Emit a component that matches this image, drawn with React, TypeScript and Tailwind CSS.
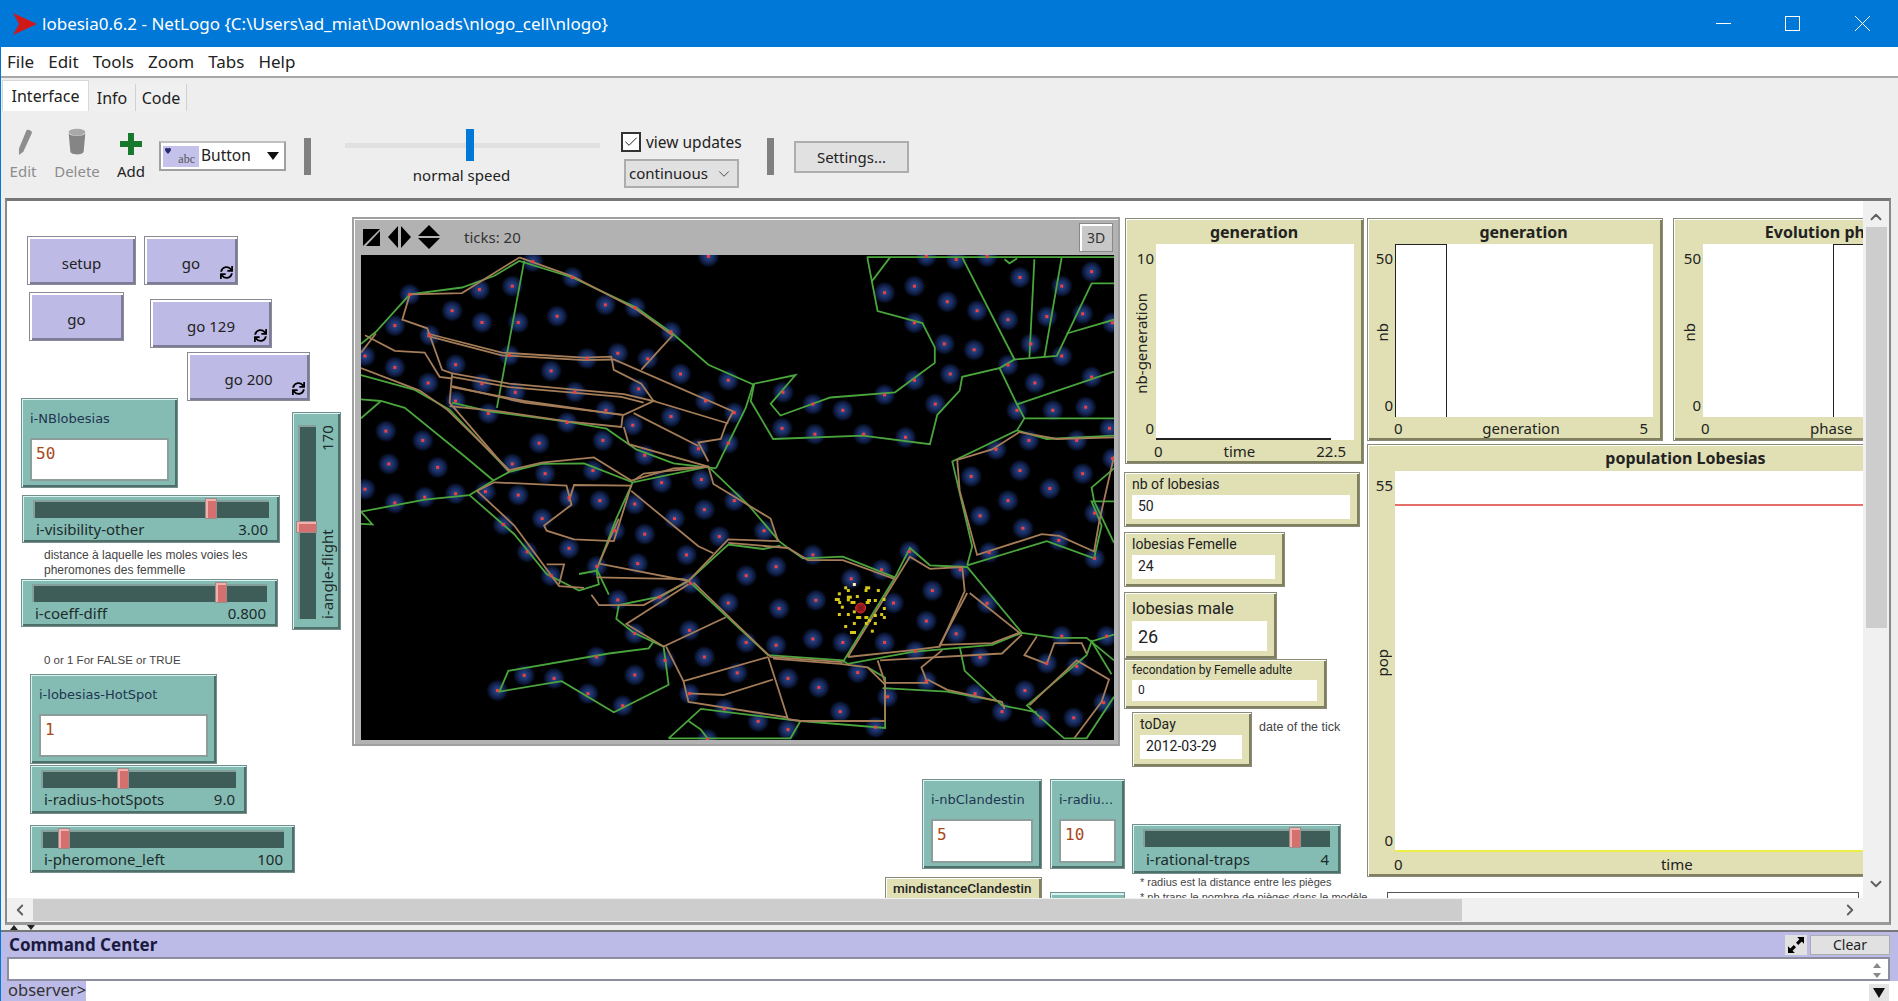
import { ChevronDown, ChevronLeft, ChevronRight, ChevronUp, Check } from 'lucide-react';
import { FaSync } from 'react-icons/fa';

const mx = (x: number) => ((x - 22) * 753) / 1513;
const my = (y: number) => ((y - 118) * 485) / 1402;

type Pt = [number, number];

const GREEN: Pt[][] = [
  [[22, 375], [52, 340], [120, 232], [225, 212], [290, 178], [340, 135], [447, 183], [575, 270], [648, 345], [720, 435], [810, 492], [795, 560], [735, 735]],
  [[350, 135], [295, 560]],
  [[205, 545], [280, 570], [436, 600], [515, 620], [575, 680], [650, 720], [735, 735]],
  [[22, 465], [130, 508], [200, 565], [320, 745]],
  [[22, 535], [62, 540], [110, 560], [230, 700], [288, 770], [240, 812], [150, 825], [22, 860], [45, 897], [22, 895]],
  [[22, 590], [62, 540]],
  [[288, 770], [320, 745], [385, 722], [470, 720], [568, 775], [720, 730], [800, 840], [862, 945], [880, 965], [910, 995], [990, 990], [1095, 1050]],
  [[240, 812], [330, 925], [395, 1040], [460, 1088], [500, 1070], [495, 1030], [535, 880], [568, 775]],
  [[460, 1040], [497, 1030], [520, 1100]],
  [[680, 1060], [625, 1105], [540, 1130], [535, 1170], [570, 1210], [630, 1250], [640, 1360], [530, 1440], [425, 1350], [300, 1380], [318, 1320], [520, 1270], [600, 1255], [610, 1235]],
  [[680, 1060], [760, 955], [830, 968], [865, 958]],
  [[680, 1060], [840, 1275], [990, 1290], [1000, 1300], [1130, 1265], [1290, 1245], [1350, 1210], [1240, 1020], [1165, 1015], [1125, 965], [1095, 1050], [990, 1295]],
  [[1240, 1015], [1400, 945], [1495, 995], [1510, 900], [1490, 830], [1535, 830]],
  [[1240, 1015], [1250, 960], [1210, 715], [1340, 625], [1355, 590], [1340, 550], [1305, 445], [1230, 470], [1225, 510], [1180, 580], [1165, 665], [1030, 640], [850, 650], [805, 540], [812, 490], [895, 465], [845, 548], [865, 582], [965, 530], [1095, 515], [1175, 430], [1175, 385], [1150, 315], [1060, 280], [1040, 130], [1040, 124], [1535, 124]],
  [[1335, 420], [1230, 125]],
  [[1305, 445], [1335, 420], [1420, 410], [1490, 200], [1535, 200]],
  [[1365, 415], [1375, 130]],
  [[1395, 415], [1430, 125]],
  [[1440, 345], [1535, 305]],
  [[1340, 550], [1535, 455]],
  [[1355, 590], [1535, 590]],
  [[1048, 195], [1085, 125]],
  [[1315, 130], [1325, 142], [1340, 128]],
  [[1340, 625], [1400, 650], [1535, 640]],
  [[1350, 1210], [1420, 1225], [1480, 1225], [1535, 1290]],
  [[1490, 1235], [1535, 1215]],
  [[1535, 1395], [1480, 1515], [1435, 1515], [1360, 1420], [1480, 1275], [1490, 1235], [1530, 1330]],
  [[1225, 1250], [1235, 1320], [1310, 1420], [1380, 1440]],
  [[1070, 1370], [1200, 1380], [1310, 1410]],
  [[640, 1515], [705, 1430], [905, 1465], [885, 1515], [640, 1515]],
  [[680, 1465], [705, 1490], [718, 1515]],
  [[905, 1465], [1075, 1485], [1075, 1340], [1040, 1310]],
  [[1535, 735], [1490, 790], [1495, 830], [1535, 950]],
];

const BROWN: Pt[][] = [
  [[340, 125], [225, 228], [120, 232], [105, 305], [155, 330], [185, 450], [205, 460], [200, 545], [320, 745]],
  [[22, 445], [140, 510], [195, 565], [320, 740], [385, 718], [490, 703], [565, 770], [650, 735], [720, 730]],
  [[340, 125], [447, 180], [575, 275], [648, 350], [585, 450]],
  [[155, 345], [305, 400], [470, 415], [525, 412], [530, 450], [585, 490], [610, 540], [760, 605]],
  [[155, 352], [305, 408], [470, 422], [530, 420], [770, 570], [755, 610], [745, 650], [700, 660], [720, 715]],
  [[205, 460], [320, 490], [550, 520], [610, 540], [550, 580], [350, 545], [205, 497]],
  [[205, 470], [320, 500], [545, 528], [590, 545]],
  [[205, 500], [350, 540], [545, 580]],
  [[200, 555], [300, 570], [440, 600], [545, 615], [548, 580]],
  [[550, 615], [560, 665], [720, 730]],
  [[570, 575], [700, 670]],
  [[30, 350], [90, 395], [150, 400], [180, 470], [205, 475]],
  [[22, 400], [52, 345]],
  [[255, 800], [290, 775], [435, 785], [445, 840], [390, 900], [395, 915], [450, 940], [530, 945], [565, 785], [450, 783], [440, 830]],
  [[255, 800], [330, 900], [420, 1075], [470, 1080]],
  [[395, 1012], [430, 1012], [420, 1070]],
  [[565, 800], [700, 960], [730, 980]],
  [[570, 770], [590, 750], [720, 730], [730, 780], [845, 880], [860, 945], [760, 940], [680, 1060], [500, 1010], [540, 880]],
  [[495, 1050], [670, 1055], [680, 1060]],
  [[485, 1100], [500, 1130], [590, 1130], [680, 1060]],
  [[680, 1070], [555, 1185], [630, 1250], [755, 1165]],
  [[760, 950], [880, 965], [920, 1000], [990, 1000], [1095, 1055]],
  [[690, 1065], [845, 1280], [990, 1295]],
  [[1000, 1280], [1125, 990], [1165, 1025], [1230, 1020], [1235, 1090], [1185, 1250], [1130, 1260], [1000, 1280]],
  [[1240, 1095], [1185, 1245], [1290, 1240], [1345, 1210], [1245, 1095]],
  [[1060, 1290], [1075, 1355], [1160, 1355], [1148, 1310], [1190, 1260]],
  [[1160, 1345], [1200, 1375], [1310, 1410], [1315, 1430]],
  [[1065, 1290], [1310, 1270], [1350, 1215]],
  [[1380, 1220], [1355, 1275], [1400, 1300], [1415, 1240], [1470, 1240], [1480, 1270]],
  [[840, 1280], [880, 1460], [905, 1465], [1075, 1465], [1075, 1360], [1040, 1310], [985, 1300], [850, 1285]],
  [[840, 1280], [670, 1350], [680, 1410], [880, 1455]],
  [[680, 1385], [750, 1390], [850, 1345]],
  [[635, 1250], [670, 1350]],
  [[1345, 630], [1290, 680], [1220, 710], [1225, 800], [1260, 985], [1390, 925], [1425, 930], [1495, 975], [1505, 890], [1535, 700]],
  [[1345, 630], [1420, 650], [1535, 645]],
  [[1365, 1420], [1460, 1290], [1525, 1345], [1510, 1410], [1455, 1515]],
];

const DOTS: Pt[] = [
  [367, 137], [447, 183], [120, 232], [260, 218], [326, 208], [205, 279], [265, 313], [338, 313], [416, 295], [513, 262], [573, 270], [90, 322], [645, 340], [30, 410], [90, 443], [160, 350], [320, 408], [212, 435], [404, 453], [476, 417], [538, 402], [598, 418], [664, 462], [760, 480], [157, 488], [265, 490], [332, 515], [452, 514], [580, 505], [714, 540], [212, 540], [514, 567], [278, 576], [436, 602], [645, 585], [772, 574], [568, 610], [72, 627], [146, 654], [380, 662], [508, 654], [760, 662], [700, 678], [592, 697], [326, 722], [78, 722], [176, 732], [392, 750], [488, 741], [30, 795], [90, 835], [150, 818], [212, 808], [272, 802], [338, 812], [440, 820], [502, 828], [626, 776], [706, 767], [772, 828], [572, 838], [712, 854], [652, 880], [386, 880], [308, 897], [832, 915], [742, 932], [592, 925], [532, 915], [440, 966], [356, 976], [676, 985], [578, 1010], [496, 1018], [404, 1045], [538, 1115], [622, 1107], [684, 1067], [760, 1124], [796, 1045], [856, 1019], [930, 985], [862, 1140], [936, 1116], [1007, 1054], [1068, 1028], [1092, 1124], [1170, 1088], [1226, 1028], [1124, 975], [1158, 1176], [1218, 1213], [1280, 1125], [1074, 1238], [990, 1238], [930, 1228], [856, 1246], [796, 1238], [682, 1203], [572, 1212], [712, 1280], [633, 1290], [495, 1280], [572, 1332], [350, 1333], [410, 1342], [296, 1377], [478, 1386], [548, 1421], [682, 1386], [778, 1326], [880, 1342], [942, 1368], [1020, 1325], [1080, 1395], [985, 1438], [752, 1430], [820, 1466], [880, 1490], [1056, 1483], [718, 1518], [1136, 1263], [1158, 1350], [1266, 1281], [1256, 1386], [1310, 1438], [1356, 1377], [1400, 1298], [1430, 1220], [1520, 1220], [1460, 1307], [1514, 1412], [1454, 1456], [1388, 1456],
  [1158, 122], [1218, 131], [1280, 122], [1074, 227], [1134, 208], [1346, 183], [1430, 208], [1490, 166], [1200, 253], [1260, 279], [1322, 305], [1400, 296], [1472, 288], [1532, 314], [1134, 314], [1194, 375], [1254, 392], [1368, 375], [1430, 410], [1322, 436], [1206, 462], [1134, 480], [1490, 471], [1376, 488], [870, 515], [930, 549], [990, 567], [1074, 522], [1176, 549], [1412, 567], [1478, 558], [1340, 567], [868, 619], [934, 636], [1032, 636], [1116, 645], [1526, 619], [1364, 654], [1460, 654], [1298, 680], [1532, 706], [1248, 758], [1346, 741], [1472, 750], [1406, 793], [1322, 828], [1266, 872], [1352, 908], [1496, 864], [1424, 943], [1284, 978], [1496, 995], [720, 122],
];

// lobesia agents, read from the 3x crop at page (700,500)
const FLIES: [number, number, number][] = [
  [463, 252, 3], [437, 262, 3], [445, 270, 3], [503, 262, 5], [498, 270, 3], [535, 270, 3], [418, 280, 3], [412, 297, 5], [419, 306, 3], [448, 290, 5], [445, 298, 3], [472, 288, 3], [507, 300, 4], [526, 300, 3], [552, 297, 3], [459, 306, 5], [503, 306, 4], [427, 320, 3], [553, 324, 3], [463, 334, 3], [418, 342, 3], [445, 342, 3], [545, 342, 3], [553, 351, 3], [476, 351, 5], [499, 351, 4], [526, 345, 3], [508, 360, 3], [499, 369, 3], [463, 369, 3], [526, 369, 3], [437, 378, 3], [459, 396, 6], [517, 392, 3],
];

const toPoints = (line: Pt[]) => line.map(([x, y]) => `${mx(x).toFixed(1)},${my(y).toFixed(1)}`).join(' ');

const WorldMap = () => (
  <svg viewBox="0 0 753 485" className="block h-[485px] w-[753px] bg-black">
    <defs>
      <radialGradient id="glow">
        <stop offset="0%" stopColor="#2a488e" />
        <stop offset="40%" stopColor="#1b3066" />
        <stop offset="75%" stopColor="#0a1430" />
        <stop offset="100%" stopColor="#000000" stopOpacity="0" />
      </radialGradient>
    </defs>
    {DOTS.map(([x, y], i) => (
      <rect key={i} x={mx(x) - 12} y={my(y) - 12} width="24" height="24" fill="url(#glow)" />
    ))}
    {GREEN.map((line, i) => (
      <polyline key={i} points={toPoints(line)} fill="none" stroke="#4aa63c" strokeWidth="1.8" />
    ))}
    {BROWN.map((line, i) => (
      <polyline key={i} points={toPoints(line)} fill="none" stroke="#a57d58" strokeWidth="1.8" />
    ))}
    {DOTS.map(([x, y], i) => (
      <rect key={i} x={mx(x) - 1.5} y={my(y) - 1.5} width="3" height="3" fill="#ee4040" />
    ))}
    {FLIES.map(([x, y, w], i) => (
      <rect key={i} x={339 + x / 3 - w / 2} y={245 + y / 3 - 1} width={w} height="3" fill={i === 0 ? '#fff6b0' : '#d8c818'} />
    ))}
    <circle cx="499.6" cy="353" r="5" fill="#a01c1c" stroke="#d03030" />
    <path d="M496.5 350l6 6M502.5 350l-6 6" stroke="#601010" />
  </svg>
);

const Btn = ({ label, forever, className }: { label: string; forever?: boolean; className: string }) => (
  <div className={`absolute flex items-center justify-center border border-[#8a8a96] bg-[#bdbbe5] font-['Noto_Sans',sans-serif] text-[15px] text-[#222] shadow-[inset_2px_2px_0_#fff,inset_-2px_-2px_0_#7c7c98] ${className}`}>
    <span className="mt-[6px]">{label}</span>
    {forever && <FaSync className="absolute right-[4px] bottom-[5px] text-[13px] text-black" />}
  </div>
);

const InputBox = ({ label, value, className, boxClass }: { label: string; value: string; className: string; boxClass: string }) => (
  <div className={`absolute flex flex-col border border-[#75908c] bg-[#84bcb4] px-[8px] shadow-[inset_1px_1px_0_#d8f4f2,inset_-2px_-2px_0_#4f6f6a] ${className}`}>
    <div className="flex h-[39px] shrink-0 items-center font-['DejaVu_Sans',sans-serif] text-[13px] whitespace-nowrap text-[#1f3550]">{label}</div>
    <div className={`border-2 border-[#8d9d9a] bg-white pt-[2px] pl-[4px] font-['DejaVu_Sans_Mono',monospace] text-[16px] text-[#a8481a] ${boxClass}`}>{value}</div>
  </div>
);

const HSlider = ({ label, value, thumb, className }: { label: string; value: string; thumb: number; className: string }) => (
  <div className={`absolute flex flex-col border border-[#75908c] bg-[#84bcb4] px-[10px] pt-[4px] shadow-[inset_1px_1px_0_#d8f4f2,inset_-2px_-2px_0_#4f6f6a] ${className}`}>
    <div className="relative h-[18px] shrink-0 border-t-2 border-l-2 border-[#86a09c] bg-[#3f5d58]">
      <div
        className="absolute top-[-4px] h-[21px] w-[12px] border border-[#9a8a8a] bg-[#d4706e] shadow-[inset_2px_2px_0_#f0b0ae]"
        style={{ left: thumb }}
      />
    </div>
    <div className="flex flex-1 items-center justify-between pr-[1px] pb-[2px] pl-[3px] font-['Noto_Sans',sans-serif] text-[15px] text-[#1d2b2a]">
      <span>{label}</span>
      <span>{value}</span>
    </div>
  </div>
);

const Monitor = ({ label, value, className, labelClass, boxClass }: { label: string; value: string; className: string; labelClass: string; boxClass: string }) => (
  <div className={`absolute flex flex-col border border-[#8a8a78] bg-[#e0e0b4] pr-[9px] pl-[7px] shadow-[inset_1px_1px_0_#fff,inset_-2px_-2px_0_#80805f] ${className}`}>
    <div className={`flex shrink-0 items-center whitespace-nowrap font-['Roboto',sans-serif] text-[#222] ${labelClass}`}>{label}</div>
    <div className={`flex items-center bg-white font-['Roboto',sans-serif] text-[#222] ${boxClass}`}>{value}</div>
  </div>
);

const PlotFrame = ({
  title, yTop, yBottom, yLabel, xLeft, xMid, xRight, className, gutter, titleRow, footRow, children,
}: {
  title: string; yTop: string; yBottom: string; yLabel: string; xLeft: string; xMid: string; xRight?: string; className: string; gutter: string; titleRow: string; footRow: string; children?: React.ReactNode;
}) => (
  <div className={`absolute flex flex-col border border-[#8a8a78] bg-[#e0e0b4] pr-[9px] font-['Noto_Sans',sans-serif] text-[15px] text-[#222] shadow-[inset_1px_1px_0_#fff,inset_-2px_-2px_0_#80805f] ${className}`}>
    <div className={`flex items-center justify-center text-[16px] font-bold whitespace-nowrap ${titleRow}`}>{title}</div>
    <div className="flex min-h-0 flex-1">
      <div className={`flex flex-col items-end justify-between pr-[2px] pb-[1px] ${gutter}`}>
        <span className="mt-[7px] leading-none">{yTop}</span>
        <span className="mr-[4px] rotate-180 self-center leading-none [writing-mode:vertical-rl]">{yLabel}</span>
        <span className="mb-[3px] leading-none">{yBottom}</span>
      </div>
      <div className="relative flex-1 bg-white">{children}</div>
    </div>
    <div className={`flex items-center justify-between ${footRow}`}>
      <span>{xLeft}</span>
      <span>{xMid}</span>
      <span>{xRight}</span>
    </div>
  </div>
);

const Notes = ({ className, children }: { className: string; children: React.ReactNode }) => (
  <div className={`absolute font-['Liberation_Sans',sans-serif] leading-[15px] whitespace-nowrap text-[#444] ${className}`}>{children}</div>
);

const ViewFrame = () => (
  <div className="absolute top-[16px] left-[345px] flex h-[529px] w-[768px] flex-col border-2 border-[#a0a0a0] bg-[#b2b2b2] pl-[7px] shadow-[inset_1px_1px_0_#fff]">
    <div className="flex h-[36px] shrink-0 items-center">
      <svg viewBox="0 0 82 24" className="h-[24px] w-[82px] shrink-0" fill="#000">
        <path d="M2 4h17L2 21zM19 6v15H5z" />
        <path d="M37 1v22L27 12zM40 1v22l10-11z" />
        <path d="M68 0l11 11H57zM57 13h22L68 24z" />
      </svg>
      <span className="ml-[21px] font-['Noto_Sans',sans-serif] text-[15px] text-[#333]">ticks: 20</span>
      <div className="mr-[5px] ml-auto flex h-[29px] w-[34px] items-center justify-center border border-[#888] bg-[#c8c8c8] font-['Noto_Sans',sans-serif] text-[14px] text-[#333] shadow-[inset_2px_2px_0_#fff]">3D</div>
    </div>
    <WorldMap />
  </div>
);

const Canvas = () => (
  <div className="relative min-w-0 flex-1 overflow-hidden bg-white">
    <Btn label="setup" className="top-[35px] left-[20px] h-[49px] w-[109px]" />
    <Btn label="go" forever className="top-[35px] left-[137px] h-[49px] w-[94px]" />
    <Btn label="go" className="top-[91px] left-[22px] h-[49px] w-[95px]" />
    <Btn label="go 129" forever className="top-[98px] left-[143px] h-[49px] w-[122px]" />
    <Btn label="go 200" forever className="top-[151px] left-[180px] h-[49px] w-[123px]" />

    <InputBox label="i-NBlobesias" value="50" className="top-[197px] left-[14px] h-[90px] w-[157px]" boxClass="h-[43px]" />
    <HSlider label="i-visibility-other" value="3.00" thumb={170} className="top-[294px] left-[15px] h-[48px] w-[258px]" />
    <Notes className="top-[347px] left-[37px] text-[12px]">
      distance à laquelle les moles voies les
      <br />
      pheromones des femmelle
    </Notes>
    <HSlider label="i-coeff-diff" value="0.800" thumb={181} className="top-[378px] left-[14px] h-[48px] w-[257px]" />

    <div className="absolute top-[211px] left-[285px] flex h-[218px] w-[49px] border border-[#75908c] bg-[#84bcb4] pt-[12px] pb-[10px] pl-[5px] shadow-[inset_1px_1px_0_#d8f4f2,inset_-2px_-2px_0_#4f6f6a]">
      <div className="relative h-full w-[18px] border-t-2 border-l-2 border-[#86a09c] bg-[#3f5d58]">
        <div className="absolute top-[94px] left-[-4px] h-[12px] w-[21px] border border-[#9a8a8a] bg-[#d4706e] shadow-[inset_2px_2px_0_#f0b0ae]" />
      </div>
      <div className="flex rotate-180 justify-between font-['Noto_Sans',sans-serif] text-[15px] leading-[22px] text-[#1d2b2a] [writing-mode:vertical-rl]">
        <span>i-angle-flight</span>
        <span>170</span>
      </div>
    </div>

    <Notes className="top-[452px] left-[37px] text-[11.5px]">0 or 1 For FALSE or TRUE</Notes>
    <InputBox label="i-lobesias-HotSpot" value="1" className="top-[473px] left-[23px] h-[90px] w-[187px]" boxClass="h-[43px]" />
    <HSlider label="i-radius-hotSpots" value="9.0" thumb={74} className="top-[564px] left-[23px] h-[49px] w-[217px]" />
    <HSlider label="i-pheromone_left" value="100" thumb={15} className="top-[624px] left-[23px] h-[48px] w-[265px]" />

    <ViewFrame />

    <PlotFrame
      title="generation" yTop="10" yBottom="0" yLabel="nb-generation" xLeft="0" xMid="time" xRight="22.5"
      className="top-[17px] left-[1118px] h-[246px] w-[239px] pl-[7px]" gutter="w-[23px]" titleRow="h-[25px] pl-[21px]" footRow="h-[23px] pl-[21px] pr-[8px]"
    >
      <div className="absolute right-[23px] bottom-0 left-0 h-[2px] bg-[#222]" />
    </PlotFrame>
    <PlotFrame
      title="generation" yTop="50" yBottom="0" yLabel="nb" xLeft="0" xMid="generation" xRight="5"
      className="top-[17px] left-[1360px] h-[223px] w-[296px] pl-[8px]" gutter="w-[19px]" titleRow="h-[25px] pl-[18px]" footRow="h-[23px] pl-[18px] pr-[5px]"
    >
      <div className="absolute top-0 bottom-0 left-0 w-[52px] border-x border-t border-[#222]" />
    </PlotFrame>
    <PlotFrame
      title="Evolution phases" yTop="50" yBottom="0" yLabel="nb" xLeft="0" xMid="phase"
      className="top-[17px] left-[1666px] h-[223px] w-[296px] pl-[8px]" gutter="w-[21px]" titleRow="h-[25px] pl-[24px]" footRow="h-[23px] pl-[19px] pr-[6px]"
    >
      <div className="absolute top-0 bottom-0 left-[130px] w-[52px] border-x border-t border-[#222]" />
    </PlotFrame>
    <PlotFrame
      title="population Lobesias" yTop="55" yBottom="0" yLabel="pop" xLeft="0" xMid="time"
      className="top-[243px] left-[1360px] h-[433px] w-[600px] pl-[8px]" gutter="w-[19px]" titleRow="h-[26px] pl-[38px]" footRow="h-[24px] pl-[18px] pr-[6px]"
    >
      <div className="absolute top-[33px] right-0 left-0 h-[2px] bg-[#e56f6a]" />
      <div className="absolute right-0 bottom-0 left-0 h-[2px] bg-[#eeee44]" />
    </PlotFrame>

    <Monitor label="nb of lobesias" value="50" className="top-[271px] left-[1117px] h-[55px] w-[236px]" labelClass="h-[22px] text-[14px]" boxClass="h-[24px] pb-[2px] pl-[6px] text-[14px]" />
    <Monitor label="lobesias Femelle" value="24" className="top-[331px] left-[1117px] h-[55px] w-[161px]" labelClass="h-[22px] text-[14px]" boxClass="h-[24px] pb-[2px] pl-[6px] text-[14px]" />
    <Monitor label="lobesias male" value="26" className="top-[391px] left-[1117px] h-[67px] w-[153px]" labelClass="h-[28px] pt-[4px] text-[16.5px]" boxClass="h-[30px] pl-[6px] text-[18px]" />
    <Monitor label="fecondation by Femelle adulte" value="0" className="top-[458px] left-[1117px] h-[50px] w-[203px]" labelClass="h-[20px] text-[12px]" boxClass="h-[21px] pb-[2px] pl-[6px] text-[12px]" />
    <Monitor label="toDay" value="2012-03-29" className="top-[511px] left-[1125px] h-[55px] w-[120px]" labelClass="h-[22px] text-[14px]" boxClass="h-[24px] pb-[2px] pl-[6px] text-[14px]" />
    <Notes className="top-[519px] left-[1252px] text-[12.5px]">date of the tick</Notes>

    <InputBox label="i-nbClandestin" value="5" className="top-[578px] left-[915px] h-[90px] w-[120px]" boxClass="h-[44px]" />
    <InputBox label="i-radiu..." value="10" className="top-[578px] left-[1043px] h-[90px] w-[75px]" boxClass="h-[44px]" />
    <HSlider label="i-rational-traps" value="4" thumb={144} className="top-[623px] left-[1125px] h-[50px] w-[209px]" />
    <Notes className="top-[674px] left-[1133px] text-[11px]">
      * radius est la distance entre les pièges
      <br />
      * nb traps le nombre de pièges dans le modèle
    </Notes>
    <Monitor label="mindistanceClandestin" value="" className="top-[676px] left-[878px] h-[50px] w-[157px]" labelClass="h-[20px] text-[13.5px] font-medium" boxClass="h-[24px]" />
    <div className="absolute top-[691px] left-[1043px] h-[40px] w-[75px] border border-[#75908c] bg-[#84bcb4] shadow-[inset_1px_2px_0_#d8f4f2]" />
    <div className="absolute top-[691px] left-[1380px] h-[40px] w-[472px] border border-[#555] bg-white" />
  </div>
);

const ToolButton = ({ label, muted, icon, className }: { label: string; muted?: boolean; icon: React.ReactNode; className: string }) => (
  <div className={`flex flex-col items-center ${className}`}>
    <div className="flex h-[26px] items-end">{icon}</div>
    <span className={`mt-[6px] text-[15px] leading-[20px] ${muted ? 'text-[#8c8c8c]' : 'text-[#222]'}`}>{label}</span>
  </div>
);

const Toolbar = () => (
  <div className="flex h-[83px] shrink-0 bg-[#eeeeee] pt-[14px] font-['Noto_Sans',sans-serif]">
    <ToolButton
      label="Edit" muted className="ml-[6px] w-[32px]"
      icon={
        <svg viewBox="0 0 14 24" className="ml-[4px] h-[26px] w-[17px]" fill="#8e8e8e">
          <path d="M8 1c1.5-1 5 .5 5 2.500L5 21l-4 3 0-6z" />
        </svg>
      }
    />
    <ToolButton
      label="Delete" muted className="ml-[14px] w-[48px]"
      icon={
        <svg viewBox="0 0 18 24" className="h-[27px] w-[20px]" fill="#858585">
          <ellipse cx="9" cy="3.5" rx="7.5" ry="3" fill="#a8a8a8" />
          <path d="M1.5 4.5c1 3 14 3 15 0L15 21c-.5 3.5-11.5 3.5-12 0z" />
        </svg>
      }
    />
    <ToolButton
      label="Add" className="ml-[14px] w-[32px]"
      icon={
        <svg viewBox="0 0 22 22" className="h-[22px] w-[22px]" fill="#17792c">
          <path d="M8 0h6v8h8v6h-8v8H8v-8H0V8h8z" />
        </svg>
      }
    />
    <div className="mt-[12px] ml-[12px] flex h-[30px] w-[127px] items-center border-2 border-[#a0a0a0] border-t-[#c0c0c0] bg-white pl-[2px] text-[15.5px] text-[#222]">
      <div className="relative flex h-[21px] w-[36px] items-end justify-end bg-[#c4c2ea] pr-[4px] font-['Liberation_Serif',serif] text-[12px] leading-[16px] text-[#555]">
        <svg viewBox="0 0 6 6" className="absolute top-[2px] left-[2px] h-[6px] w-[6px]" fill="#2a2a70">
          <path d="M0 1.500C0-.5 3-.5 3 1c0-1.500 3-1.500 3 .5C6 3.500 4 4.500 3 6 2 4.500 0 3.500 0 1.500z" />
        </svg>
        abc
      </div>
      <span className="ml-[2px]">Button</span>
      <svg viewBox="0 0 12 8" className="ml-auto mr-[5px] h-[8px] w-[12px]" fill="#111">
        <path d="M0 0h12L6 8z" />
      </svg>
    </div>
    <div className="mt-[9px] ml-[18px] h-[37px] w-[7px] bg-[#808080]" />
    <div className="ml-[34px] flex w-[255px] flex-col items-center">
      <div className="relative mt-[14px] h-[5px] w-full bg-[#e0e0e0]">
        <div className="absolute top-[-14px] left-[121px] h-[32px] w-[8px] bg-[#0078d7]" />
      </div>
      <span className="mt-[17px] ml-[-22px] text-[15px] leading-[20px] text-[#222]">normal speed</span>
    </div>
    <div className="ml-[21px] flex w-[125px] flex-col">
      <div className="flex items-center">
        <div className="mt-[3px] flex h-[20px] w-[20px] items-center justify-center border-2 border-[#333] bg-white">
          <Check size={16} strokeWidth={1.5} className="text-[#222]" />
        </div>
        <span className="mt-[2px] ml-[5px] text-[15.5px] leading-[20px] text-[#222]">view updates</span>
      </div>
      <div className="mt-[7px] ml-[3px] flex h-[29px] w-[115px] items-center justify-between border-2 border-[#adadad] bg-[#e1e1e1] pr-[4px] pl-[3px] text-[15px] text-[#222]">
        continuous
        <ChevronDown size={18} strokeWidth={1.25} className="text-[#444]" />
      </div>
    </div>
    <div className="mt-[9px] ml-[21px] h-[37px] w-[7px] bg-[#808080]" />
    <div className="mt-[12px] ml-[20px] flex h-[32px] w-[115px] items-center justify-center border-2 border-[#adadad] bg-[#e1e1e1] text-[15px] text-[#222]">Settings...</div>
  </div>
);

const CommandCenter = () => (
  <div className="flex h-[71px] shrink-0 flex-col border-t-2 border-[#777] bg-[#bcbae6] pl-[6px] font-['Noto_Sans',sans-serif]">
    <div className="flex h-[25px] shrink-0 items-center">
      <span className="ml-[2px] text-[17px] font-bold text-[#1a1a40]">Command Center</span>
      <div className="mr-[8px] ml-auto flex items-center">
        <div className="flex h-[20px] w-[22px] items-center justify-center bg-[#e1e1e1]">
          <svg viewBox="0 0 14 14" className="h-[16px] w-[16px]" fill="#000">
            <path d="M8 0h6v6l-2-2-3 3-2-2 3-3zM0 14V8l2 2 3-3 2 2-3 3 2 2z" />
          </svg>
        </div>
        <div className="ml-[3px] flex h-[20px] w-[80px] items-start justify-center border border-[#adadad] bg-[#e1e1e1] text-[14px] leading-[17px] text-[#222]">Clear</div>
      </div>
    </div>
    <div className="mr-[8px] flex h-[24px] shrink-0 items-start justify-end border-2 border-[#8d8da0] bg-white pr-[1px]">
      <div className="flex w-[20px] flex-col items-center text-[#777]">
        <svg viewBox="0 0 8 5" className="mt-[4px] h-[5px] w-[8px]" fill="#888"><path d="M4 0l4 5H0z" /></svg>
        <svg viewBox="0 0 8 5" className="mt-[5px] h-[5px] w-[8px]" fill="#888"><path d="M0 0h8L4 5z" /></svg>
      </div>
    </div>
    <div className="flex min-h-0 flex-1">
      <div className="flex w-[79px] items-center pb-[2px] pl-[1px] text-[16.5px] leading-none text-[#333]">observer&gt;</div>
      <div className="flex flex-1 justify-end bg-white pt-[3px] pr-[9px]">
        <div className="flex h-[17px] w-[20px] items-center justify-center bg-[#e4e4e4]">
          <svg viewBox="0 0 12 10" className="h-[10px] w-[12px]" fill="#111"><path d="M0 0h12L6 10z" /></svg>
        </div>
      </div>
    </div>
  </div>
);

export default function App() {
  return (
    <div className="flex h-[1001px] w-[1898px] flex-col overflow-hidden border-l border-[#0078d7] bg-[#eeeeee]">
      <div className="flex h-[47px] shrink-0 items-center bg-[#0078d7] font-['Noto_Sans',sans-serif] text-white">
        <svg viewBox="0 0 24 22" className="ml-[12px] h-[22px] w-[24px] shrink-0" fill="#d01818">
          <path d="M0 0l24 11L0 22l6-11z" />
        </svg>
        <span className="ml-[5px] text-[17px]">lobesia0.6.2 - NetLogo {'{'}C:\Users\ad_miat\Downloads\nlogo_cell\nlogo{'}'}</span>
        <div className="ml-auto flex items-center">
          <div className="h-px w-[15px] bg-white" />
          <div className="ml-[54px] h-[15px] w-[15px] border border-white" />
          <svg viewBox="0 0 15 15" className="mr-[28px] ml-[55px] h-[15px] w-[15px]" stroke="#fff">
            <path d="M0 0l15 15M15 0L0 15" />
          </svg>
        </div>
      </div>
      <div className="flex h-[29px] shrink-0 items-center gap-[14px] bg-white pl-[6px] font-['Noto_Sans',sans-serif] text-[17px] text-[#222]">
        <span>File</span>
        <span>Edit</span>
        <span>Tools</span>
        <span>Zoom</span>
        <span>Tabs</span>
        <span>Help</span>
      </div>
      <div className="flex h-[39px] shrink-0 border-t-2 border-[#a8a8a8] pt-[2px] pl-[1px] font-['Noto_Sans',sans-serif] text-[16px] text-[#222]">
        <div className="flex h-[31px] w-[87px] items-center justify-center border border-b-0 border-[#d8d8d8] bg-white">Interface</div>
        <div className="mt-[4px] flex h-[27px] w-[47px] items-center justify-center border-r border-[#d0d0d0] bg-[#f0f0f0]">Info</div>
        <div className="mt-[4px] flex h-[27px] w-[51px] items-center justify-center border-r border-[#d0d0d0] bg-[#f0f0f0]">Code</div>
      </div>
      <Toolbar />
      <div className="ml-[4px] mr-[7px] flex h-[727px] shrink-0 flex-col border-x-2 border-t-[3px] border-b-[3px] border-x-[#8a8a8a] border-t-[#777] border-b-[#999]">
        <div className="flex min-h-0 flex-1">
          <Canvas />
          <div className="flex w-[26px] shrink-0 flex-col items-center bg-[#f0f0f0]">
            <ChevronUp size={18} strokeWidth={2.5} className="mt-[7px] shrink-0 text-[#606060]" />
            <div className="mt-[1px] h-[401px] w-[21px] bg-[#cdcdcd]" />
            <ChevronDown size={18} strokeWidth={2.5} className="mt-auto mb-[5px] shrink-0 text-[#606060]" />
          </div>
        </div>
        <div className="flex h-[24px] shrink-0 items-center bg-[#f0f0f0]">
          <ChevronLeft size={18} strokeWidth={2.5} className="mx-[4px] shrink-0 text-[#606060]" />
          <div className="h-[22px] w-[1429px] bg-[#cdcdcd]" />
          <ChevronRight size={18} strokeWidth={2.5} className="mr-[30px] ml-auto shrink-0 text-[#606060]" />
        </div>
      </div>
      <div className="flex h-[5px] shrink-0 gap-[9px] pl-[9px]">
        <svg viewBox="0 0 8 5" className="h-[5px] w-[8px]" fill="#222"><path d="M4 0l4 5H0z" /></svg>
        <svg viewBox="0 0 8 5" className="h-[5px] w-[8px]" fill="#222"><path d="M0 0h8L4 5z" /></svg>
      </div>
      <CommandCenter />
    </div>
  );
}
